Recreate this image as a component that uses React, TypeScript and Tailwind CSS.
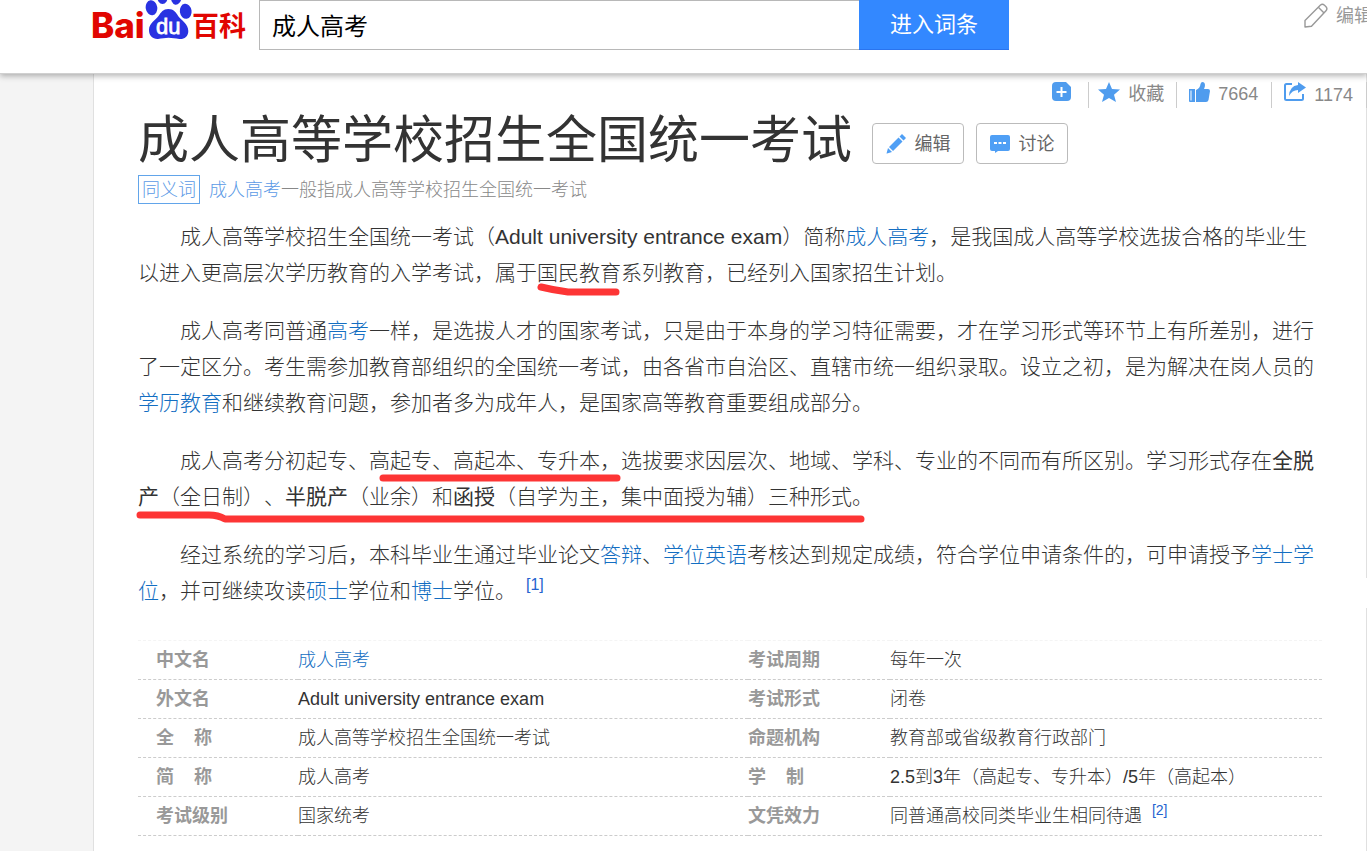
import React from 'react';

const Ref: React.FC<{ children: React.ReactNode }> = ({ children }) => (
  <a href="#" className="text-[#136ec2]">
    {children}
  </a>
);

const Paragraph: React.FC<{ children: React.ReactNode }> = ({ children }) => (
  <p className="indent-[42px] text-[21px] leading-[36px]">{children}</p>
);

const Logo = () => (
  <svg width="167" height="50" viewBox="0 0 167 50" role="img" aria-label="百度百科">
    <g fill="#e10601">
      <text x="-1" y="38" fontSize="35" fontWeight="800" fontFamily="Inter, sans-serif">Bai</text>
      <text x="100" y="36" fontSize="27" fontWeight="700" fontFamily="Noto Sans CJK SC, sans-serif">百科</text>
    </g>
    <g fill="#2932e1">
      <ellipse cx="59.500" cy="7.700" rx="5.800" ry="7.500" transform="rotate(-8 59.500 7.700)" />
      <ellipse cx="70.500" cy="-4" rx="5.500" ry="8" />
      <ellipse cx="84.500" cy="-4" rx="5.500" ry="8.800" transform="rotate(8 84.500 -4)" />
      <ellipse cx="93.700" cy="11.300" rx="5.900" ry="7.500" transform="rotate(-8 93.700 11.300)" />
      <path d="M76.300 9c5.500 0 7.700 3.500 10 7.200 3 4.300 10 7.300 10 14.800 0 6-4.500 8.500-9 8-4-.4-7-1.200-10.700-1.200s-6.600.9-10.600 1.100c-5.500.2-9-3-9-8.900 0-7 6.500-9.500 9.500-14 2.500-3.700 4.800-7 9.800-7z" />
    </g>
    <text x="64" y="34" fontSize="22" fill="#fff" stroke="#fff" strokeWidth="0.8" fontFamily="Liberation Sans, sans-serif">du</text>
  </svg>
);

const PencilOutline = () => (
  <svg width="24" height="25" viewBox="0 0 24 25" fill="none" stroke="#999" strokeWidth="1.4" strokeLinejoin="round" aria-hidden="true">
    <path d="M1 24v-6.500L16.500 2q2-1.600 4 .3l1.500 1.500q1.800 2 0 4L7.500 23.300z" />
    <path d="M14.300 4.300l5.800 5.800" />
  </svg>
);

const Header = () => (
  <header className="relative z-10 flex h-[74px] items-start border-b border-[#d0d0d0] bg-white pl-[92px] shadow-[0_2px_6px_rgba(0,0,0,0.3)]">
    <a href="#" className="shrink-0">
      <Logo />
    </a>
    <form className="flex h-[50px] shrink-0">
      <input
        aria-label="搜索词条"
        defaultValue="成人高考"
        className="w-[600px] border border-r-0 border-[#b8b8b8] bg-white px-3 pt-1 text-[24px] text-black outline-none"
      />
      <button type="button" className="w-[150px] border-b border-[#2a74ee] bg-[#3388ff] text-[22px] text-white">
        进入词条
      </button>
    </form>
    <a href="#" className="ml-auto flex w-[63px] gap-2 overflow-hidden pt-[3px] text-lg whitespace-nowrap text-[#999]">
      <span className="shrink-0">
        <PencilOutline />
      </span>
      <span className="shrink-0 leading-[26px]">编辑</span>
    </a>
  </header>
);

const Tools = () => (
  <div className="-mr-px flex h-[34px] items-end justify-end text-lg text-[#888]">
    <button type="button" aria-label="添加" className="flex h-[26px] items-start pr-[17px]">
      <svg width="19" height="19" viewBox="0 0 19 19" aria-hidden="true">
        <path d="M4 0h10l5 5v10a4 4 0 0 1-4 4H4a4 4 0 0 1-4-4V4a4 4 0 0 1 4-4z" fill="#4f9cee" />
        <path d="M9.500 5v10M4.500 10h10" stroke="#fff" strokeWidth="2" />
      </svg>
    </button>
    <button type="button" className="flex h-[26px] items-start gap-2 border-l border-[#ccc] pr-3 pl-[9px]">
      <svg width="22" height="20" viewBox="0 0 22 20" aria-hidden="true">
        <path d="M11 0l3 7 8 .5-6 5.200L18 20l-7-4-7 4 2-7.300L0 7.500 8 7z" fill="#4f9cee" />
      </svg>
      <span className="leading-[24px]">收藏</span>
    </button>
    <button type="button" className="flex h-[26px] items-start gap-2 border-l border-[#ccc] pr-[13px] pl-3">
      <svg width="21" height="20" viewBox="0 0 21 20" fill="#4f9cee" aria-hidden="true">
        <path d="M0 7h6v13H1q-1 0-1-1zM1.500 8.500v10h1v-10z" fillRule="evenodd" />
        <path d="M7 8q4-1.500 4.500-6Q12 0 13.500 0c3 0 3 4 1.500 7h4q2 0 2 2l-1.500 9q-.5 2-2.500 2H7z" />
      </svg>
      <span className="leading-[24px]">7664</span>
    </button>
    <button type="button" className="flex h-[26px] items-start gap-2 border-x border-[#ccc] pr-[13px] pl-3">
      <svg width="22" height="19" viewBox="0 0 22 19" aria-hidden="true">
        <path d="M8 2H2.500Q1 2 1 3.500v13Q1 18 2.500 18h15q1.500 0 1.500-1.500V12" fill="none" stroke="#4f9cee" strokeWidth="2" />
        <path d="M14 0l8 5.500-8 5.500V8q-6 0-9 6 .5-10 9-11z" fill="#4f9cee" />
      </svg>
      <span className="leading-[27px]">1174</span>
    </button>
  </div>
);

const Title = () => (
  <div className="flex h-[61px] items-end gap-3">
    <h1 className="mr-2 text-[51px] leading-[56px] whitespace-nowrap text-[#333]">成人高等学校招生全国统一考试</h1>
    <button type="button" className="mb-[5px] flex h-[41px] w-[92px] shrink-0 items-center justify-center gap-[9px] rounded border border-[#bbb] text-lg text-[#666]">
      <svg width="20" height="20" viewBox="0 0 20 20" fill="#4f9ff5" aria-hidden="true">
        <path d="M13.500 2.500L16 0l4 4-2.500 2.500zM12.500 3.500l4 4L7 17l-4-4zM2 14l4 4-5 1.500H.5z" />
      </svg>
      编辑
    </button>
    <button type="button" className="mb-[5px] flex h-[41px] w-[92px] shrink-0 items-center justify-center gap-[9px] rounded border border-[#bbb] text-lg text-[#666]">
      <svg width="20" height="18" viewBox="0 0 20 18" aria-hidden="true">
        <path d="M2 0h16q2 0 2 2v12q0 2-2 2H8l-3 2v-2H2q-2 0-2-2V2q0-2 2-2z" fill="#4f9ff5" />
        <path d="M4 8h3M8.500 8h3M13 8h3" stroke="#fff" strokeWidth="2" />
      </svg>
      讨论
    </button>
  </div>
);

// hand-drawn marker strokes that lie over the summary text
const Strokes = () => (
  <svg className="pointer-events-none absolute top-0 left-0 overflow-visible" width="740" height="310" viewBox="0 0 740 310" fill="none" stroke="#fd3535" strokeWidth="7" strokeLinecap="round" strokeLinejoin="round" aria-hidden="true">
    <path d="M403 68q12 3 27 5h48" />
    <path d="M245 259h234" />
    <path d="M2 296h69q9 0 16 4h636" />
  </svg>
);

const Summary = () => (
  <div className="relative mt-[15px] flex flex-col gap-[22px] font-light">
    <Paragraph>
      成人高等学校招生全国统一考试（<span className="font-normal">Adult university entrance exam</span>）简称<Ref>成人高考</Ref>，是我国成人高等学校选拔合格的毕业生以进入更高层次学历教育的入学考试，属于国民教育系列教育，已经列入国家招生计划。
    </Paragraph>
    <Paragraph>
      成人高考同普通<Ref>高考</Ref>一样，是选拔人才的国家考试，只是由于本身的学习特征需要，才在学习形式等环节上有所差别，进行了一定区分。考生需参加教育部组织的全国统一考试，由各省市自治区、直辖市统一组织录取。设立之初，是为解决在岗人员的<Ref>学历教育</Ref>和继续教育问题，参加者多为成年人，是国家高等教育重要组成部分。
    </Paragraph>
    <Paragraph>
      成人高考分初起专、高起专、高起本、专升本，选拔要求因层次、地域、学科、专业的不同而有所区别。学习形式存在<b>全脱产</b>（全日制）、<b>半脱产</b>（业余）和<b>函授</b>（自学为主，集中面授为辅）三种形式。
    </Paragraph>
    <Paragraph>
      经过系统的学习后，本科毕业生通过毕业论文<Ref>答辩</Ref>、<Ref>学位英语</Ref>考核达到规定成绩，符合学位申请条件的，可申请授予<Ref>学士学位</Ref>，并可继续攻读<Ref>硕士</Ref>学位和<Ref>博士</Ref>学位。
      <sup className="ml-[10px] text-base leading-none font-normal text-[#2563cf]">
        <a href="#">[1]</a>
      </sup>
    </Paragraph>
    <Strokes />
  </div>
);

const rows: [string, React.ReactNode, string, React.ReactNode][] = [
  ['中文名', <Ref>成人高考</Ref>, '考试周期', '每年一次'],
  ['外文名', <span className="font-normal">Adult university entrance exam</span>, '考试形式', '闭卷'],
  ['全\u00a0\u00a0\u00a0\u00a0称', '成人高等学校招生全国统一考试', '命题机构', '教育部或省级教育行政部门'],
  [
    '简\u00a0\u00a0\u00a0\u00a0称',
    '成人高考',
    '学\u00a0\u00a0\u00a0\u00a0制',
    <>
      <span className="font-normal">2.5</span>到<span className="font-normal">3</span>年（高起专、专升本）<span className="font-normal">/5</span>年（高起本）
    </>,
  ],
  [
    '考试级别',
    '国家统考',
    '文凭效力',
    <>
      同普通高校同类毕业生相同待遇
      <sup className="ml-[10px] text-sm leading-none font-normal text-[#2563cf]">
        <a href="#">[2]</a>
      </sup>
    </>,
  ],
];

const InfoTable = () => (
  <table className="mt-[31px] w-full table-fixed border-t border-dashed border-[#f4f4f4] text-left text-lg leading-[36px] font-light">
    <tbody>
      {rows.map(([label, value, label2, value2]) => (
        <tr key={label} className="h-[39px] border-b border-dashed border-[#ccc]">
          <th className="w-[160px] p-0 pl-[18px] font-bold text-[#999]">{label}</th>
          <td className="w-[38%] p-0">{value}</td>
          <th className="w-[142px] p-0 font-bold text-[#999]">{label2}</th>
          <td className="p-0">{value2}</td>
        </tr>
      ))}
    </tbody>
  </table>
);

const App: React.FC = () => {
  return (
    <div className="min-h-screen overflow-x-clip bg-[#f4f4f4] font-['Liberation_Sans','Noto_Sans_CJK_SC',sans-serif] text-[#333] [text-spacing-trim:space-all]" lang="zh-CN">
      <Header />
      <main className="relative ml-[93px] min-h-[777px] border-x border-[#e0e0e0] bg-white">
        <Tools />
        <div className="px-[44px]">
          <Title />
          <div className="mt-[6px] flex items-center gap-[9px] text-lg font-light text-[#888]">
            <span className="flex h-[29px] items-center border border-[#62a5ea] px-[3px] text-[#5b9ae6]">同义词</span>
            <span>
              <a href="#" className="text-[#5b9ae6]">成人高考</a>一般指成人高等学校招生全国统一考试
            </span>
          </div>
          <Summary />
          <InfoTable />
        </div>
        <span className="absolute top-[504px] -right-px h-[30px] w-px bg-white" />
      </main>
    </div>
  );
};

export default App;
